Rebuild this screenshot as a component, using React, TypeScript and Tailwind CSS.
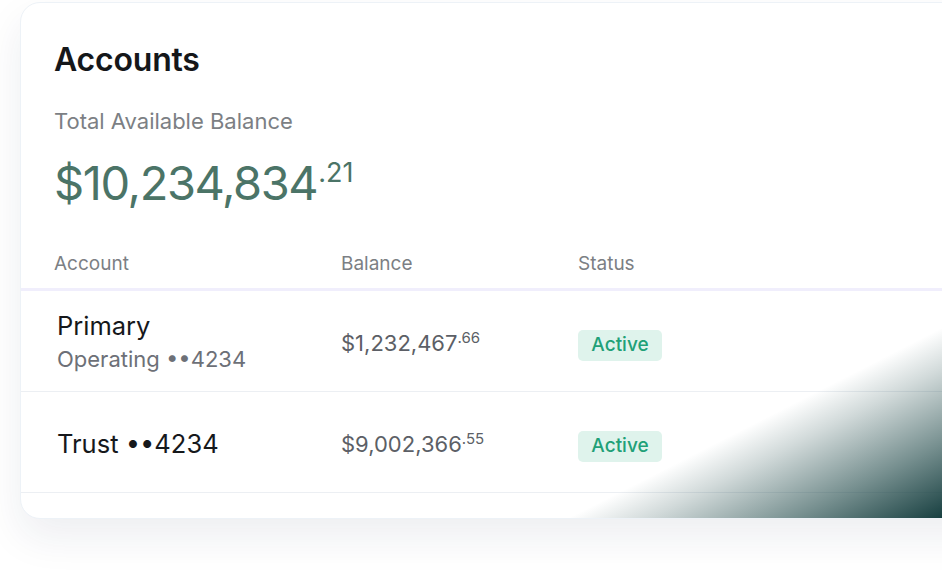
import React from "react";

type Row = {
  name: string;
  sub?: string;
  whole: string;
  cents: string;
};

const rows: Row[] = [
  { name: "Primary", sub: "Operating ••4234", whole: "$1,232,467", cents: ".66" },
  { name: "Trust ••4234", whole: "$9,002,366", cents: ".55" },
];

function Badge() {
  return (
    <span className="inline-flex h-[31px] w-[84px] items-center justify-center rounded-[5px] bg-[#dff3ec] text-[19px] font-medium text-[#21a077]">
      Active
    </span>
  );
}

export default function App() {
  return (
    <div
      className="relative h-[575px] w-[942px] overflow-hidden bg-white"
      style={{ fontFamily: "Inter, 'Noto Sans', sans-serif" }}
    >
      <div className="pl-[20px] pt-[2px]">
        <div className="relative w-[980px] overflow-hidden rounded-[20px] border border-[#edf2f7] bg-white shadow-[0_18px_40px_rgba(30,40,80,0.08)]">
          {/* summary */}
          <div className="px-[33px] pt-[37px]">
            <h1 className="text-[32px] font-semibold leading-[40px] tracking-[-0.2px] text-[#15171a]">Accounts</h1>
            <p className="mt-[27px] text-[22px] leading-[28px] text-[#7c7f84]">Total Available Balance</p>
            <div className="mt-[20px] flex items-start text-[#4b7467]">
              <span className="text-[47px] leading-[56px] tracking-[-1.4px]">$10,234,834</span>
              <span className="ml-[1px] mt-[4px] text-[27px] leading-[28px]">.21</span>
            </div>
          </div>

          {/* table */}
          <div className="mt-[41px]">
            <div className="grid grid-cols-[287px_237px_1fr] border-b-[3px] border-[#f0eefc] pb-[12px] pl-[33px] text-[19px] leading-[24px] text-[#7c7f84]">
              <span>Account</span>
              <span>Balance</span>
              <span>Status</span>
            </div>
            {rows.map((r) => (
              <div
                key={r.name}
                className="grid h-[101px] grid-cols-[284px_237px_1fr] items-center border-b border-[#eceff3] pl-[36px] pt-[4px]"
              >
                <div className="flex flex-col">
                  <span className="text-[25.5px] leading-[32px] text-[#16181b]">{r.name}</span>
                  {r.sub && <span className="text-[22px] leading-[35px] text-[#6d7077]">{r.sub}</span>}
                </div>
                <div className="flex items-start text-[#5c5f66]">
                  <span className="text-[22px] leading-[28px]">{r.whole}</span>
                  <span className="mt-[1px] text-[15px] leading-[16px]">{r.cents}</span>
                </div>
                <div className="pt-[4px]">
                  <Badge />
                </div>
              </div>
            ))}
            <div className="h-[25px]" />
          </div>

          {/* corner shade */}
          <div className="pointer-events-none absolute bottom-0 left-[540px] h-[220px] w-[382px] bg-[linear-gradient(153deg,rgba(26,68,68,0)_54%,rgba(26,68,68,0.2)_64%,rgba(26,68,68,0.6)_82%,#173f40_100%)]" />
        </div>
      </div>
    </div>
  );
}
